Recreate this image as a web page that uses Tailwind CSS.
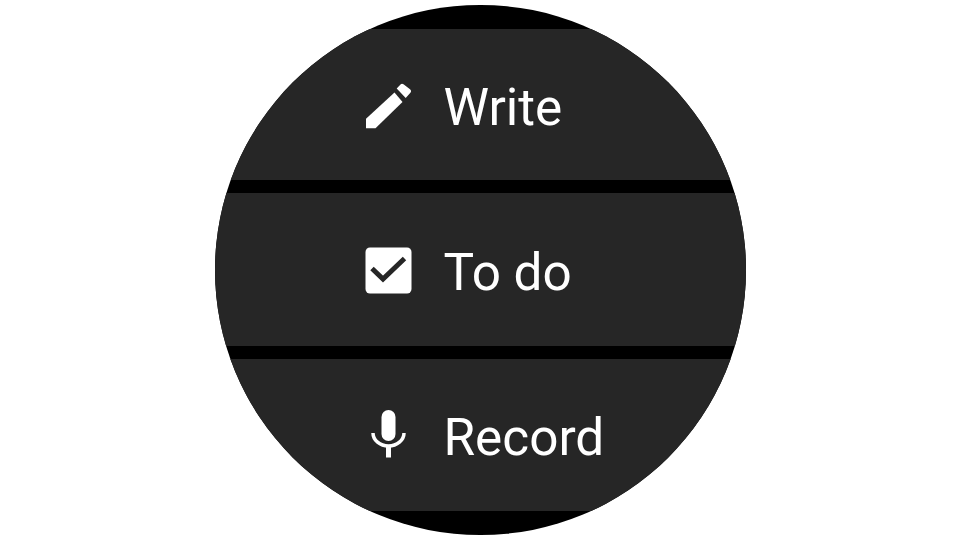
<!DOCTYPE html>
<html><head><script src="https://cdn.jsdelivr.net/npm/@tailwindcss/browser@4"></script></head>
<body class="bg-white">
<div class="w-[960px] h-[540px] flex items-center justify-center bg-white font-['Roboto',sans-serif]">
<div class="w-[531px] h-[530px] rounded-full bg-black overflow-hidden flex flex-col gap-[13px] pt-[24px] text-white text-[51.300px] leading-none">
<div class="h-[151px] shrink-0 bg-[#262626] flex items-center gap-[26px] pl-[143px]">
<svg class="w-[60px] h-[60px]" viewBox="0 0 60 60" fill="#fff"><path d="M8 53.200V43.800L36.500 17.500l8 9.500L17.500 53.200z"/><path d="M38.700 13.500l3.800-4q1.400-1.500 3-.2l6.800 5.200q1.600 1.300.3 3L47.700 23z"/></svg>
<span class="pt-[6px]">Write</span></div>
<div class="h-[153px] shrink-0 bg-[#262626] flex items-center gap-[26px] pl-[143px]">
<svg class="w-[60px] h-[60px]" viewBox="0 0 60 60"><rect x="7.500" y="7.500" width="46" height="46" rx="4.500" fill="#fff"/><path d="M14 28.500l11 10.500 21.500-20.500" fill="none" stroke="#262626" stroke-width="5"/></svg>
<span class="pt-[6px]">To do</span></div>
<div class="h-[152px] shrink-0 bg-[#262626] flex items-center gap-[26px] pl-[143px]">
<svg class="w-[60px] h-[60px]" viewBox="0 0 60 60" fill="#fff"><rect x="23.500" y="5" width="14" height="31" rx="7"/><path d="M15 28a15.500 13 0 0 0 31 0" fill="none" stroke="#fff" stroke-width="3.500"/><rect x="28" y="40" width="5" height="12.500"/></svg>
<span class="pt-[6px]">Record</span></div>
</div></div>
</body></html>
